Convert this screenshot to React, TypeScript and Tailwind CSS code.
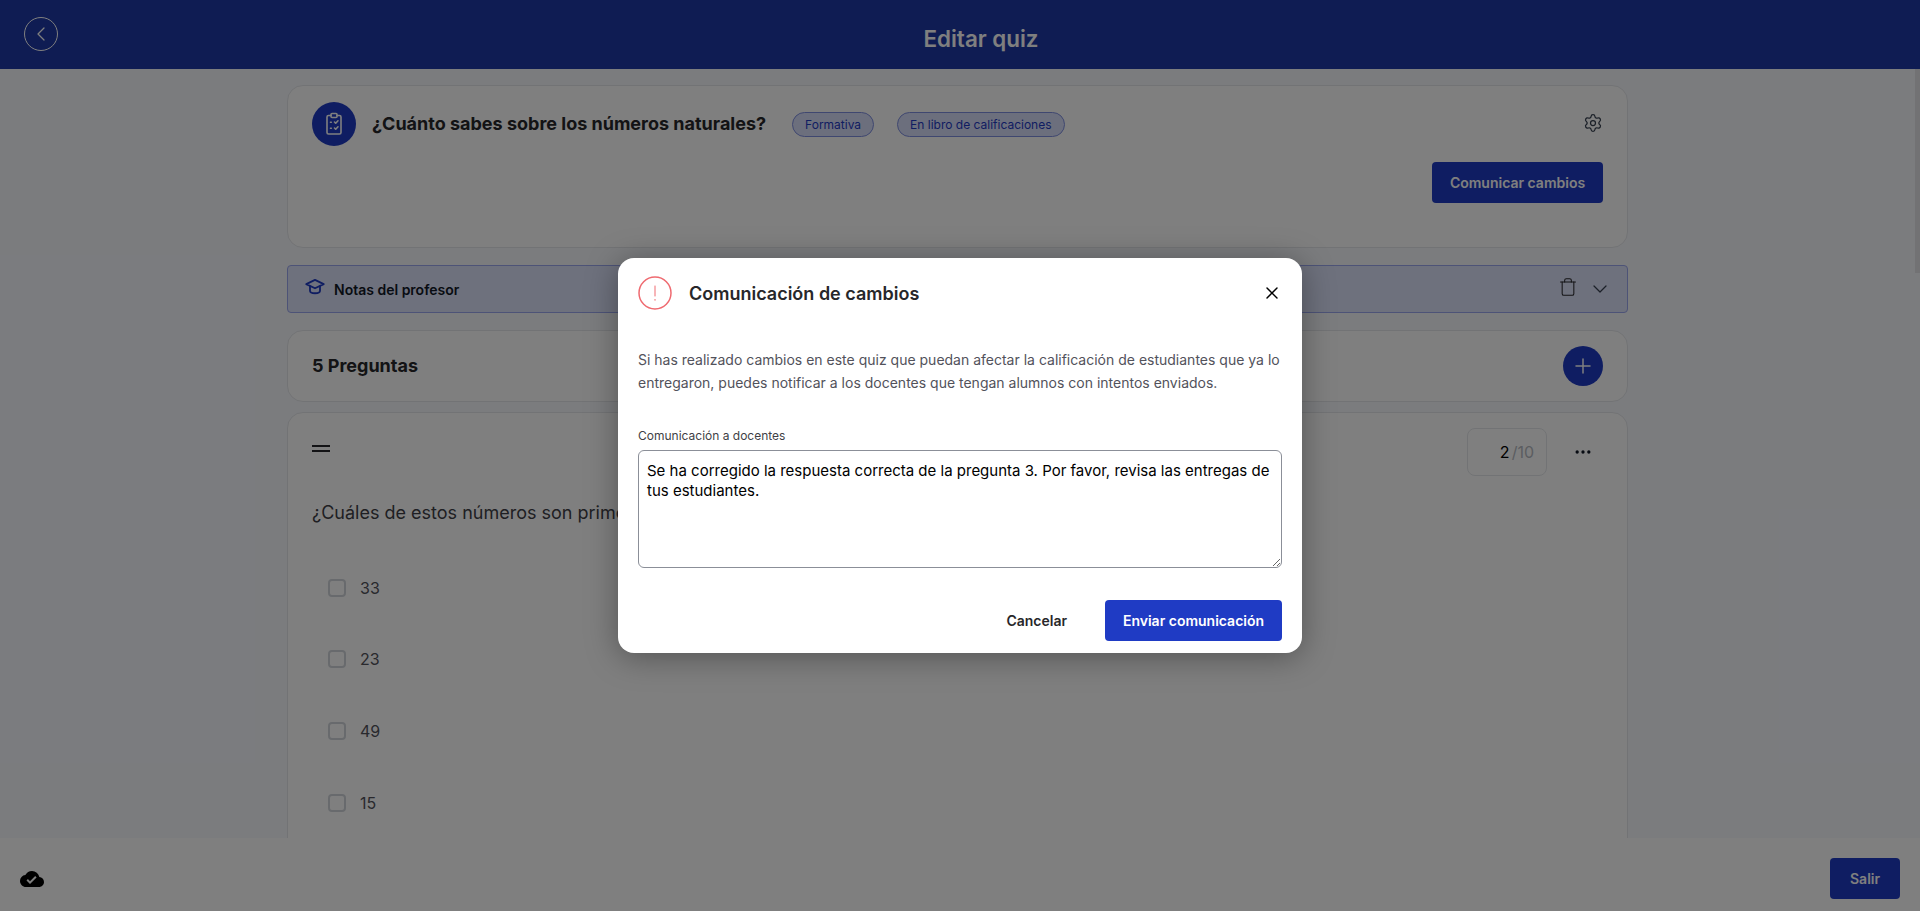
import { ChevronDown, ChevronLeft, Ellipsis, Plus, Settings, Trash, X } from 'lucide-react'
import { MdCloudDone } from 'react-icons/md'

const options = ['33', '23', '49', '15']

function ClipboardIcon() {
  return (
    <svg width="24" height="24" viewBox="0 0 24 24" fill="none" stroke="currentColor" strokeWidth="1.6" strokeLinecap="round" strokeLinejoin="round">
      <rect x="9" y="1.5" width="6" height="4" rx="1" />
      <path d="M9 3.5H6.5A1.5 1.5 0 0 0 5 5v15.5A1.5 1.5 0 0 0 6.5 22h11a1.5 1.5 0 0 0 1.5-1.5V5a1.5 1.5 0 0 0-1.5-1.5H15" />
      <path d="M12.5 10l1.2 1.2 2.3-2.4M12.5 16l1.2 1.2 2.3-2.4" />
      <path d="M8.5 10.2h.8M8.5 16.2h.8" />
    </svg>
  )
}

function CapIcon() {
  return (
    <svg width="20" height="20" viewBox="0 0 24 24" fill="none" stroke="currentColor" strokeWidth="2.2" strokeLinecap="round" strokeLinejoin="round">
      <path d="M1.5 8.5 12 3.5l10.5 5L12 13.5z" />
      <path d="M6 11v5.5c0 1.7 2.8 3 6 3s6-1.3 6-3V11" />
    </svg>
  )
}

function AlertIcon() {
  return (
    <svg width="34" height="34" viewBox="0 0 34 34" fill="none" stroke="#ef6a70" strokeLinecap="round">
      <circle cx="17" cy="17" r="16" strokeWidth="1.5" />
      <path d="M17 10v10" strokeWidth="1" />
      <path d="M17 23.5v.5" strokeWidth="1.25" />
    </svg>
  )
}

export default function App() {
  return (
    <div className="relative flex h-screen flex-col overflow-hidden bg-[#f6f8fd] font-['Inter',sans-serif]">
      {/* header */}
      <header className="flex h-[69px] shrink-0 items-center bg-[#1e38a6] px-6">
        <button className="flex h-[34px] w-[34px] -translate-y-px items-center justify-center rounded-full border border-white text-white">
          <ChevronLeft size={24} strokeWidth={1.25} />
        </button>
        <h1 className="ml-2 flex-1 pt-2 text-center text-[22.4px] font-semibold text-white">Editar quiz</h1>
      </header>

      <div className="flex min-h-0 flex-1">
        <main className="min-w-0 flex-1 overflow-hidden pt-4">
          <div className="mx-auto w-[1341px]">
            {/* quiz info */}
            <section className="h-[163px] rounded-2xl border border-[#e5e7eb] bg-white px-6 pt-4">
              <div className="flex items-center">
                <div className="flex h-11 w-11 items-center justify-center rounded-full bg-[#1f3bc4] text-white">
                  <ClipboardIcon />
                </div>
                <h2 className="ml-4 text-lg font-bold text-[#27272a]">¿Cuánto sabes sobre los números naturales?</h2>
                <span className="ml-[26px] flex h-[25px] items-center rounded-full border border-[#7f8fe0] bg-[#d9defa] px-3 pt-0.5 text-xs text-[#1f3bc4]">Formativa</span>
                <span className="ml-[23px] flex h-[25px] items-center rounded-full border border-[#7f8fe0] bg-[#d9defa] px-3 pt-0.5 text-xs text-[#1f3bc4]">En libro de calificaciones</span>
                <Settings size={20} strokeWidth={1.5} className="ml-auto -translate-y-px text-[#374151]" />
              </div>
              <div className="mt-4 flex justify-end">
                <button className="h-[41px] w-[171px] rounded bg-[#1f3bc4] text-sm font-semibold text-white">Comunicar cambios</button>
              </div>
            </section>

            {/* teacher notes */}
            <section className="mt-[17px] flex h-12 items-center rounded border border-[#9aa6ee] bg-[#dde2fb] pl-[17px] pr-[15px]">
              <span className="-translate-y-0.5 text-[#1f3bc4]">
                <CapIcon />
              </span>
              <span className="ml-[9px] pt-0.5 text-sm font-semibold text-[#111827]">Notas del profesor</span>
              <Trash size={20} strokeWidth={1.25} className="ml-auto -translate-y-0.5 text-[#27272a]" />
              <ChevronDown size={24} strokeWidth={1.25} className="ml-2.5 text-[#374151]" />
            </section>

            {/* question count */}
            <section className="mt-[17px] flex h-[72px] items-center justify-between rounded-2xl border border-[#e5e7eb] bg-white px-6">
              <h3 className="text-lg font-bold text-[#27272a]">5 Preguntas</h3>
              <button className="flex h-10 w-10 items-center justify-center rounded-full bg-[#1f3bc4] text-white">
                <Plus size={24} strokeWidth={1.5} />
              </button>
            </section>

            {/* question */}
            <section className="mt-[10px] h-[700px] rounded-2xl border border-[#e5e7eb] bg-white px-6 pt-[15px]">
              <div className="flex items-center">
                <div className="mb-2 flex w-[18px] flex-col gap-[3px]">
                  <div className="h-0.5 bg-[#27272a]" />
                  <div className="h-0.5 bg-[#27272a]" />
                </div>
                <div className="ml-auto flex h-12 w-20 items-center justify-end rounded-lg border border-[#e5e7eb] pr-3 text-base">
                  <span className="text-black">2</span>
                  <span className="ml-0.5 text-[#b6bac2]">/10</span>
                </div>
                <button className="ml-4 flex h-10 w-10 items-center justify-center text-[#111827]">
                  <Ellipsis size={20} strokeWidth={2} />
                </button>
              </div>
              <p className="mt-[23px] text-lg text-[#3f3f46]">¿Cuáles de estos números son primos?</p>
              <ul className="mt-[25px] pl-4">
                {options.map(o => (
                  <li key={o} className="flex h-[71.6px] items-center gap-[14px] text-base text-[#52525b]">
                    <span className="h-[18px] w-[18px] rounded border-2 border-[#d1d5db]" />
                    {o}
                  </li>
                ))}
              </ul>
            </section>
          </div>
        </main>

        {/* scrollbar */}
        <div className="w-[5px] shrink-0">
          <div className="h-[204px] bg-[#e4e5e8]" />
        </div>
      </div>

      {/* footer */}
      <footer className="z-10 flex h-[73px] shrink-0 items-center justify-between bg-white pl-5 pr-5 pt-2">
        <MdCloudDone size={24} className="text-black" />
        <button className="h-[41px] w-[70px] rounded bg-[#1f3bc4] text-sm font-semibold text-white">Salir</button>
      </footer>

      {/* modal */}
      <div className="absolute inset-0 z-20 flex items-center justify-center bg-black/50">
        <div className="h-[395px] w-[684px] rounded-2xl bg-white px-5 pt-[18px] shadow-[0_4px_32px_rgba(0,0,0,0.35)]">
          <div className="flex items-center">
            <AlertIcon />
            <h2 className="ml-[17px] pt-0.5 text-lg font-semibold text-[#27272a]">Comunicación de cambios</h2>
            <button className="ml-auto text-black">
              <X size={20} strokeWidth={1.75} />
            </button>
          </div>
          <p className="mt-[38px] text-sm leading-[23px] text-[#52525b]">
            Si has realizado cambios en este quiz que puedan afectar la calificación de estudiantes que ya lo entregaron, puedes notificar a los docentes que tengan alumnos con intentos enviados.
          </p>
          <label className="mt-[34px] block text-xs leading-4 text-[#3f3f46]">Comunicación a docentes</label>
          <textarea
            className="mt-1.5 block h-[118px] w-full rounded-md border border-[#8b8f98] px-2 pb-2 pt-2.5 text-[15px] leading-5 text-black outline-none"
            defaultValue="Se ha corregido la respuesta correcta de la pregunta 3. Por favor, revisa las entregas de tus estudiantes."
          />
          <div className="mt-8 flex items-center justify-end">
            <button className="mr-[18px] h-[41px] px-5 text-sm font-semibold text-[#27272a]">Cancelar</button>
            <button className="h-[41px] w-[177px] rounded bg-[#1f3bc4] text-sm font-semibold text-white">Enviar comunicación</button>
          </div>
        </div>
      </div>
    </div>
  )
}
